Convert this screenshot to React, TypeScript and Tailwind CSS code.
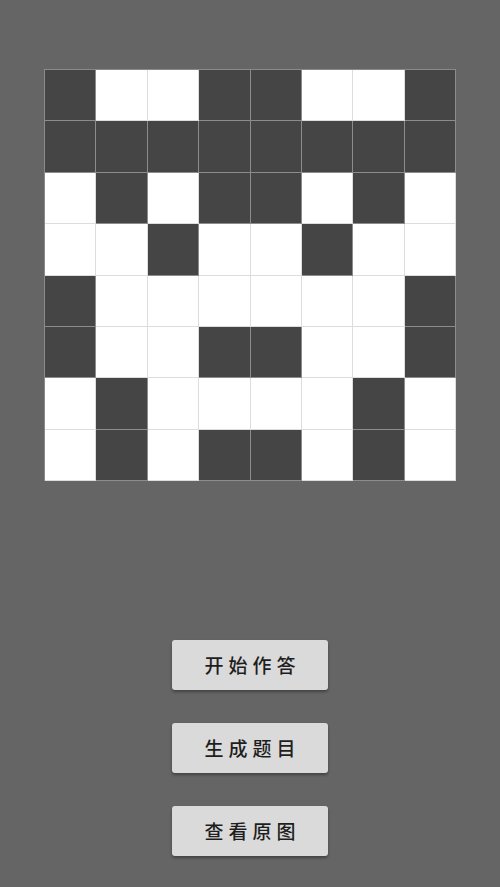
import React from "react";

const pattern = [
  "10011001",
  "11111111",
  "01011010",
  "00100100",
  "10000001",
  "10011001",
  "01000010",
  "01011010",
];

const buttons = ["开始作答", "生成题目", "查看原图"];

export default function App() {
  return (
    <div
      className="w-[500px] h-[887px] bg-[#656565] flex flex-col items-center pt-[69px] pb-[31px]"
      style={{ fontFamily: '"Noto Sans CJK SC", "Noto Sans", sans-serif' }}
    >
      {/* puzzle board */}
      <div className="grid grid-cols-8 w-[412px] h-[412px] border-t border-l border-[#8a8a8a]">
        {pattern.flatMap((row, r) =>
          row.split("").map((c, i) => (
            <div
              key={`${r}-${i}`}
              className={
                c === "1"
                  ? "bg-[#454545] border-r border-b border-[rgba(195,195,195,0.57)]"
                  : "bg-white border-r border-b border-[rgba(195,195,195,0.57)]"
              }
            />
          ))
        )}
      </div>

      <div className="flex-1" />

      {/* actions */}
      <div className="flex flex-col gap-[33px]">
        {buttons.map((label) => (
          <button
            key={label}
            className="w-[156px] h-[50px] rounded-[3px] bg-[#dadada] text-[#1e1e1e] text-[19px] font-medium tracking-[5px] pl-[5px] shadow-[0_2px_3px_rgba(0,0,0,0.35)]"
          >
            {label}
          </button>
        ))}
      </div>
    </div>
  );
}
